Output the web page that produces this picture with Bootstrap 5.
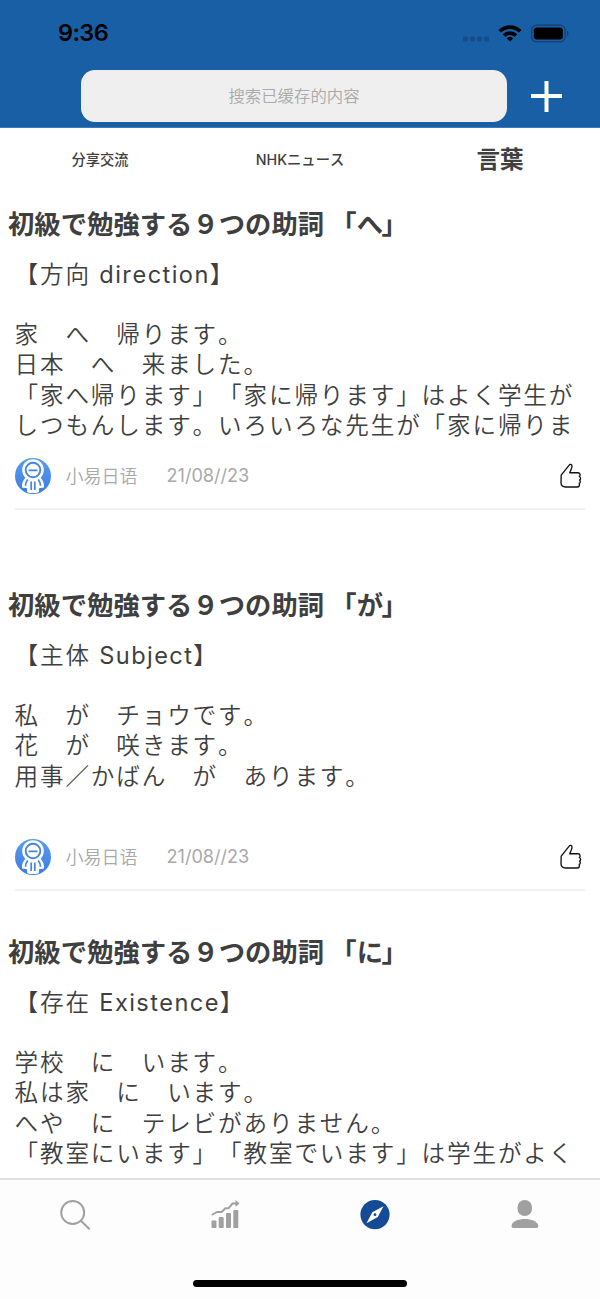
<!DOCTYPE html>
<html lang="ja">
<head>
<meta charset="utf-8">
<meta name="viewport" content="width=device-width, initial-scale=1">
<title>言葉</title>
<link href="https://cdn.jsdelivr.net/npm/bootstrap@5.3.0/dist/css/bootstrap.min.css" rel="stylesheet">
<style>
body{font-family:Inter,"Noto Sans CJK JP",sans-serif;color:#3f3f3f;height:1299px;overflow:hidden;text-spacing-trim:space-all;font-kerning:none}
.zh{font-family:Inter,"Noto Sans CJK SC",sans-serif}
svg{display:block;flex:none}
.topbar{height:128px;background:#195fa5;border-bottom:1px solid #3d7abc}
.statusbar{height:70px;padding:0 29px 4px 58px}
.clock{font-size:23.5px;font-weight:600;color:#000;line-height:1;letter-spacing:-.6px}
.searchbox{width:426px;height:52px;margin-left:81px;border-radius:14px;background:#efefef;color:#a9a9a9;font-size:16.4px;font-weight:350}
.tabs{height:64px;font-weight:500}
.tabs a{color:#3f3f3f;font-size:14.3px;text-decoration:none}
.tabs .active{font-size:23.6px;font-weight:700}
.entry-title{font-size:26.35px;font-weight:700;line-height:40px;margin:0;padding-left:8px;white-space:pre}
.tuck{letter-spacing:-1.5px}
.entry-text{font-size:23.6px;letter-spacing:1.85px;font-weight:350;line-height:30.3px;height:182px;margin:16px 0 0;padding-left:14.5px;white-space:pre;overflow:hidden}
.entry-text div{height:30.3px}
.latin{font-weight:400;letter-spacing:1.4px}
.entry-meta{height:68px;margin:0 15px;padding-top:3px;border-bottom:2px solid #f1f1f1;color:#a9a9a9;font-size:18px;font-weight:350}
.author{margin-left:14.5px}
.date{font-weight:400;font-size:18.1px;margin-left:29px}
.thumb{margin-right:3px}
.feed{height:1050px;overflow:hidden}
.bottombar{height:121px;background:#fdfdfd;border-top:2px solid #e0e0e0}
.homebar{width:214px;height:7px;border-radius:4px;background:#000;margin-bottom:12px}
.gap-first{margin-top:11.500px}
.gap-wide{margin-top:75px}
.gap-narrow{margin-top:41px}
</style>
</head>
<body class="bg-white d-flex flex-column">
<svg width="0" height="0" class="position-absolute">
  <defs>
    <linearGradient id="sky" x2="0" y2="1"><stop stop-color="#5b9bf0"/><stop offset="1" stop-color="#3b7de0"/></linearGradient>
    <symbol id="avatar" viewBox="0 0 36 36">
      <circle cx="18" cy="18" r="18" fill="url(#sky)"/>
      <path d="M11 19C8 22 6.500 26 7 29.500l5 .8V33c0 1.500 1 2 6 2s6-.5 6-2v-2.700l5-.8C29.500 26 28 22 25 19z" fill="#fff"/>
      <circle cx="18" cy="12" r="10.800" fill="#fff"/>
      <circle cx="18" cy="12" r="7.300" fill="#fff" stroke="#4485e4" stroke-width="1.900"/>
      <path d="M13.500 12.400h9M12.800 21.500c-2 2.500-2.500 4-2.300 6.300M23.200 21.500c2 2.500 2.500 4 2.300 6.300M16.200 23.500V32M19.800 23.500V32" fill="none" stroke="#4485e4" stroke-width="1.700"/>
    </symbol>
    <symbol id="thumb" viewBox="0 0 22 26">
      <path d="M1.200 12.200 9 2.300C10 .8 12 1.200 12 3.200c0 2-1.500 4.500-2.300 6.500H18c2.200 0 2.700 2.800 1.300 3.800 1.700.7 1.700 3 .2 3.600 1.200 1 1 3-.3 3.400.7 1.600 0 3.500-2 3.500H5.500C2.500 24 1 22.500 1 19.500z" fill="none" stroke="#111" stroke-width="1.350" stroke-linejoin="round"/>
    </symbol>
  </defs>
</svg>

<header class="topbar flex-shrink-0">
  <div class="statusbar d-flex align-items-center justify-content-between">
    <span class="clock">9:36</span>
    <svg width="108" height="20" viewBox="0 0 108 20">
      <g fill="#154d86"><rect x="0" y="13.500" width="5" height="5" rx="1.500"/><rect x="7" y="13.500" width="5" height="5" rx="1.500"/><rect x="14" y="13.500" width="5" height="5" rx="1.500"/><rect x="21" y="13.500" width="5" height="5" rx="1.500"/></g>
      <g transform="translate(35.500 1.500)"><path d="M0 5.500a16.500 16.500 0 0 1 23 0l-2.500 2.600a13 13 0 0 0-18 0zM4.200 9.700a10.400 10.400 0 0 1 14.600 0l-2.600 2.600a6.900 6.900 0 0 0-9.400 0zM8.200 13.800a4.800 4.800 0 0 1 6.600 0L11.500 17z" fill="#000"/></g>
      <rect x="68.600" y="2.200" width="33.500" height="16.600" rx="5" fill="none" stroke="#123e6d" stroke-width="1.200"/>
      <rect x="70.800" y="4.400" width="29" height="12.200" rx="3" fill="#000"/>
      <path d="M104 8c2 .7 2 4.300 0 5z" fill="#123e6d"/>
    </svg>
  </div>
  <div class="d-flex align-items-center">
    <div class="searchbox zh d-flex align-items-center justify-content-center" lang="zh-CN">搜索已缓存的内容</div>
    <svg class="ms-4" width="31" height="31" viewBox="0 0 31 31"><path d="M0 15h31M15.500 0v31" stroke="#fff" stroke-width="4"/></svg>
  </div>
</header>

<main class="feed flex-shrink-0 d-flex flex-column">
  <nav class="tabs row g-0 align-items-center text-center flex-shrink-0">
    <a class="col zh" href="#" lang="zh-CN">分享交流</a>
    <a class="col" href="#">NHKニュース</a>
    <a class="col active" href="#">言葉</a>
  </nav>

  <article class="flex-shrink-0 gap-first">
    <h2 class="entry-title"><span>初級で勉強する９つの助詞 「</span><span class="tuck">へ</span><span>」</span></h2>
    <div class="entry-text"><div><span>【方向 </span><span class="latin">direction</span><span>】</span></div><div></div><div>家　へ　帰ります。</div><div>日本　へ　来ました。</div><div>「家へ帰ります」「家に帰ります」はよく学生が</div><div>しつもんします。いろいろな先生が「家に帰りま</div></div>
    <div class="entry-meta d-flex align-items-center">
      <svg width="36" height="36"><use href="#avatar"/></svg>
      <span class="zh author" lang="zh-CN">小易日语</span><span class="date">21/08//23</span>
      <svg class="ms-auto thumb" width="22" height="26"><use href="#thumb"/></svg>
    </div>
  </article>

  <article class="flex-shrink-0 gap-wide">
    <h2 class="entry-title"><span>初級で勉強する９つの助詞 「</span><span class="tuck">が</span><span>」</span></h2>
    <div class="entry-text"><div><span>【主体 </span><span class="latin">Subject</span><span>】</span></div><div></div><div>私　が　チョウです。</div><div>花　が　咲きます。</div><div>用事／かばん　が　あります。</div></div>
    <div class="entry-meta d-flex align-items-center">
      <svg width="36" height="36"><use href="#avatar"/></svg>
      <span class="zh author" lang="zh-CN">小易日语</span><span class="date">21/08//23</span>
      <svg class="ms-auto thumb" width="22" height="26"><use href="#thumb"/></svg>
    </div>
  </article>

  <article class="flex-shrink-0 gap-narrow">
    <h2 class="entry-title"><span>初級で勉強する９つの助詞 「</span><span class="tuck">に</span><span>」</span></h2>
    <div class="entry-text"><div><span>【存在 </span><span class="latin">Existence</span><span>】</span></div><div></div><div>学校　に　います。</div><div>私は家　に　います。</div><div>へや　に　テレビがありません。</div><div>「教室にいます」「教室でいます」は学生がよく</div></div>
  </article>
</main>

<footer class="bottombar flex-shrink-0 d-flex flex-column justify-content-between align-items-center">
  <nav class="row g-0 w-100 pt-3 mt-1">
    <a class="col d-flex justify-content-center" href="#" aria-label="検索"><svg width="30" height="30" viewBox="0 0 30 30" fill="none" stroke="#a0a0a0" stroke-width="2" stroke-linecap="round"><circle cx="12.700" cy="12.500" r="11.500"/><path d="m21 20.700 8 8"/></svg></a>
    <a class="col d-flex justify-content-center" href="#" aria-label="統計"><svg width="30" height="30" viewBox="0 0 30 30" fill="#a0a0a0"><rect x="1.500" y="20.500" width="5" height="7.500" rx="1"/><rect x="8.700" y="17" width="5" height="11" rx="1"/><rect x="16" y="13" width="5" height="15" rx="1"/><rect x="23.300" y="10" width="5" height="18" rx="1"/><path d="M2.500 14.500 7 12h4.500l4-3.700h3L22.500 3.500h5" fill="none" stroke="#a0a0a0" stroke-width="2" stroke-linecap="round" stroke-linejoin="round"/><path d="M25.500 0v7l4-3.500z"/></svg></a>
    <a class="col d-flex justify-content-center" href="#" aria-label="発見"><svg width="30" height="30" viewBox="0 0 30 30"><circle cx="15" cy="14.600" r="14.600" fill="#154a96"/><path d="M23.500 6.200 17.800 17 6.500 23.200 12.300 12.200z" fill="#fff"/><circle cx="15" cy="14.700" r="1.400" fill="#154a96"/></svg></a>
    <a class="col d-flex justify-content-center" href="#" aria-label="マイページ"><svg width="30" height="30" viewBox="0 0 30 30" fill="#a0a0a0"><rect x="7.500" y="0" width="14.500" height="16" rx="7.200"/><path d="M1.500 26C2 16.800 27.500 16.800 28.300 26c0 1.300-.7 1.900-1.800 1.900H3.300c-1.200 0-1.800-.6-1.800-1.900z"/></svg></a>
  </nav>
  <div class="homebar"></div>
</footer>
<script src="https://cdn.jsdelivr.net/npm/bootstrap@5.3.0/dist/js/bootstrap.bundle.min.js"></script>
</body>
</html>
